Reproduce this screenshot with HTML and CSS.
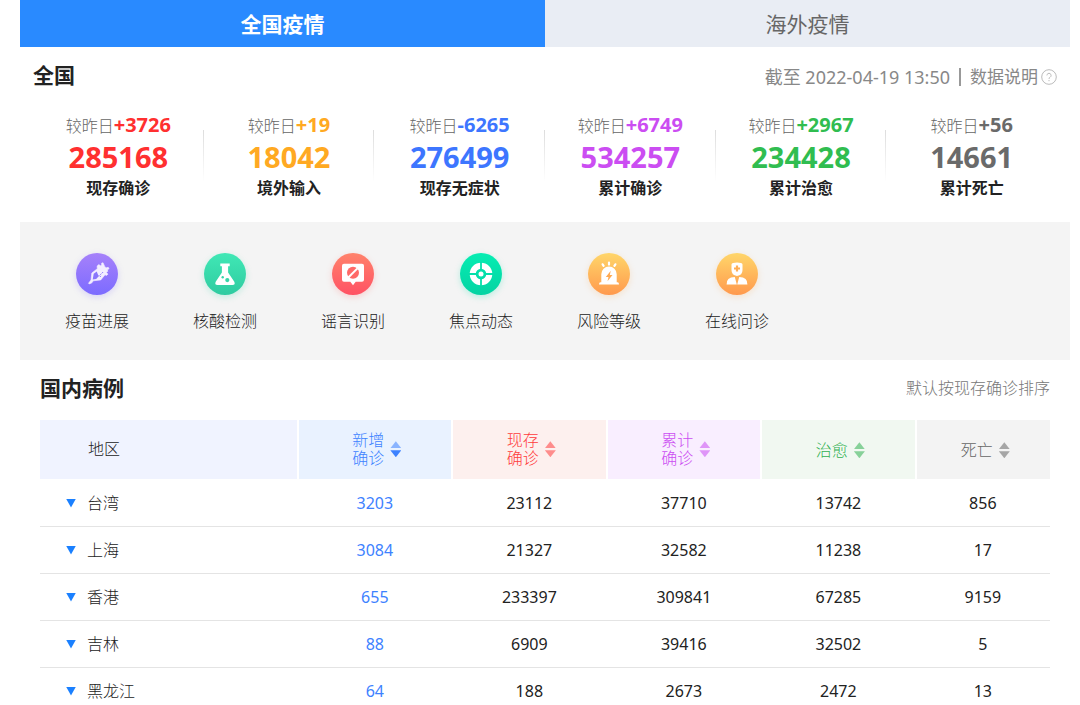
FILE: index.html
```html
<!DOCTYPE html>
<html lang="zh-CN">
<head>
<meta charset="utf-8">
<title>全国疫情</title>
<link rel="stylesheet" href="styles.css">
</head>
<body>
<nav class="tabs">
  <button class="tab tab-active" type="button">全国疫情</button>
  <button class="tab" type="button">海外疫情</button>
</nav>

<section class="summary">
  <header class="summary-head">
    <h2 class="title">全国</h2>
    <p class="updated">
      <span>截至 2022-04-19 13:50</span>
      <span class="bar"></span>
      <a class="note" href="#">数据说明<svg class="help" viewBox="0 0 16 16" fill="none" stroke="#bbb"><circle cx="8" cy="8" r="7.3"/><path d="M5.9 6.4a2.1 2.1 0 1 1 3.2 1.8C8.3 8.7 8 9 8 9.900M8 11v1.200"/></svg></a>
    </p>
  </header>
  <ul class="stats">
    <li class="stat red"><p class="delta">较昨日<b>+3726</b></p><strong class="total">285168</strong><p class="label">现存确诊</p></li>
    <li class="stat orange"><p class="delta">较昨日<b>+19</b></p><strong class="total">18042</strong><p class="label">境外输入</p></li>
    <li class="stat blue"><p class="delta">较昨日<b>-6265</b></p><strong class="total">276499</strong><p class="label">现存无症状</p></li>
    <li class="stat purple"><p class="delta">较昨日<b>+6749</b></p><strong class="total">534257</strong><p class="label">累计确诊</p></li>
    <li class="stat green"><p class="delta">较昨日<b>+2967</b></p><strong class="total">234428</strong><p class="label">累计治愈</p></li>
    <li class="stat gray"><p class="delta">较昨日<b>+56</b></p><strong class="total">14661</strong><p class="label">累计死亡</p></li>
  </ul>
</section>

<nav class="services">
  <a class="service" href="#">
    <span class="badge badge-violet"><svg viewBox="0 0 42 42"><path fill="#f3eeff" stroke="#f3eeff" stroke-width=".6" stroke-linejoin="round" d="M12.500 30.200l2.500-3.200.8-7 5.500-4.300-.2-2.600 1.700-1.500 1.700 1.100 1.300-.6-.3-1.800 1.500-.6 1.900 4.200 1.300.9 2-.5.9 1.300-1.700 1.400.4 1.300-1.500.9 1.600 2-1.400 1.200-1.500-.6-4.200 5.100-7.500.9-1.700 2.300-2.500.8z"/><path fill="#8a76fb" d="M17.700 20.800l3-2.400 2 4.800-2.500 2.900-3.500.5z"/><path d="M22.300 23.300l1-1.100M24.300 21.800l1-1.100M23.900 24l1-1.100M26 20.200l1-1.100" stroke="#8a76fb" stroke-width="1"/></svg></span>
    疫苗进展
  </a>
  <a class="service" href="#">
    <span class="badge badge-teal"><svg viewBox="0 0 42 42"><path fill="#fff" d="M16.300 10.600h9.400v2.600h-1.600v6.300l6.200 9.200q1.400 3.300-1.900 3.300H13.600q-3.300 0-1.900-3.300l6.200-9.200v-6.300h-1.600z"/><circle cx="23.300" cy="27.100" r="2.100" fill="#35d6a8"/><circle cx="18.700" cy="24.200" r="1.200" fill="#35d6a8"/></svg></span>
    核酸检测
  </a>
  <a class="service" href="#">
    <span class="badge badge-red"><svg viewBox="0 0 42 42"><path fill="#fff" d="M12 10.700h18q2 0 2 2v14q0 2-2 2h-6.300L21 32.300l-2.700-3.600H12q-2 0-2-2v-14q0-2 2-2z"/><circle cx="21" cy="19.800" r="6" fill="#ff6a68"/><path d="M16.300 24.500l9.400-9.400" stroke="#fff" stroke-width="2"/></svg></span>
    谣言识别
  </a>
  <a class="service" href="#">
    <span class="badge badge-mint"><svg viewBox="0 0 42 42" fill="none" stroke="#fff"><circle cx="21" cy="21" r="8.300" stroke-width="6"/><path d="M21 9v24M9 21h24" stroke="#05dfaa" stroke-width="1.800"/><circle cx="21" cy="21" r="4.300" fill="#05dfaa" stroke="none"/><circle cx="21" cy="21" r="2.500" fill="#fff" stroke="none"/></svg></span>
    焦点动态
  </a>
  <a class="service" href="#">
    <span class="badge badge-amber"><svg viewBox="0 0 42 42" fill="#fff"><path d="M13.300 29.200v-8a7.700 7.700 0 0 1 15.400 0v8h.8q1.500 0 1.500 2.300H11q0-2.300 1.500-2.300z"/><path d="M22.800 17.800l-5 6.200h2.700l-1 4.200 5-6.200h-2.700z" fill="#ffaa52"/><path d="M21 9.600v2M14.600 11.300l1 1.600M27.400 11.300l-1 1.600" stroke="#fff" stroke-width="2.200" stroke-linecap="round"/></svg></span>
    风险等级
  </a>
  <a class="service" href="#">
    <span class="badge badge-amber"><svg viewBox="0 0 42 42" fill="#fff"><path d="M15.500 11.600q0-1.600 1.600-1.700 4-.6 7.800 0 1.600.1 1.600 1.700v5.500q0 5.600-5.500 5.800-5.500-.2-5.500-5.800z"/><path d="M10.600 31.500q-.5-7.300 8.200-7.600l2 7.600zM31.400 31.500q.5-7.300-8.200-7.600l-2 7.600z"/><path d="M21 12.500v6M18 15.500h6" stroke="#ffae57" stroke-width="2.200"/></svg></span>
    在线问诊
  </a>
</nav>

<section class="cases">
  <header class="cases-head">
    <h2 class="title">国内病例</h2>
    <p class="hint">默认按现存确诊排序</p>
  </header>
  <table class="table">
    <colgroup><col class="col-area"><col class="col-num"><col class="col-num"><col class="col-num"><col class="col-num"><col class="col-dead"></colgroup>
    <thead>
      <tr>
        <th class="th-area" scope="col">地区</th>
        <th class="th-new" scope="col"><button class="sort" type="button"><span>新增<br>确诊</span><span class="arrows"><i class="up"></i><i class="down on"></i></span></button></th>
        <th class="th-now" scope="col"><button class="sort" type="button"><span>现存<br>确诊</span><span class="arrows"><i class="up"></i><i class="down"></i></span></button></th>
        <th class="th-sum" scope="col"><button class="sort" type="button"><span>累计<br>确诊</span><span class="arrows"><i class="up"></i><i class="down"></i></span></button></th>
        <th class="th-cured" scope="col"><button class="sort" type="button"><span>治愈</span><span class="arrows"><i class="up"></i><i class="down"></i></span></button></th>
        <th class="th-dead" scope="col"><button class="sort" type="button"><span>死亡</span><span class="arrows"><i class="up"></i><i class="down"></i></span></button></th>
      </tr>
    </thead>
    <tbody>
      <tr><td class="area"><button class="expand" type="button"><i class="caret"></i>台湾</button></td><td class="new">3203</td><td>23112</td><td>37710</td><td>13742</td><td>856</td></tr>
      <tr><td class="area"><button class="expand" type="button"><i class="caret"></i>上海</button></td><td class="new">3084</td><td>21327</td><td>32582</td><td>11238</td><td>17</td></tr>
      <tr><td class="area"><button class="expand" type="button"><i class="caret"></i>香港</button></td><td class="new">655</td><td>233397</td><td>309841</td><td>67285</td><td>9159</td></tr>
      <tr><td class="area"><button class="expand" type="button"><i class="caret"></i>吉林</button></td><td class="new">88</td><td>6909</td><td>39416</td><td>32502</td><td>5</td></tr>
      <tr><td class="area"><button class="expand" type="button"><i class="caret"></i>黑龙江</button></td><td class="new">64</td><td>188</td><td>2673</td><td>2472</td><td>13</td></tr>
    </tbody>
  </table>
</section>
</body>
</html>
```
FILE: styles.css
```css
* { box-sizing: border-box; }
body {
  margin: 0 10px 0 20px;
  background: #fff;
  color: #222;
  font-family: "Noto Sans", "Noto Sans CJK SC", sans-serif;
  font-size: 16px;
  line-height: 24px;
}
h2, p, ul { margin: 0; padding: 0; }
button {
  margin: 0;
  padding: 0;
  border: 0;
  background: none;
  color: inherit;
  font: inherit;
  cursor: pointer;
}
a { color: inherit; text-decoration: none; }

.tabs { display: flex; }
.tab {
  flex: 1;
  height: 47px;
  background: #e9edf4;
  color: #666;
  font-size: 21px;
}
.tab-active { background: #298aff; color: #fff; font-weight: 700; }

.title { font-size: 21px; line-height: 30px; font-weight: 700; }

.summary { padding: 13px 13px 22px; }
.summary-head { display: flex; justify-content: space-between; align-items: flex-end; }
.updated { display: flex; align-items: center; color: #888; font-size: 18px; line-height: 26px; }
.bar { width: 2px; height: 18px; margin: 0 9px; background: #999; }
.note { display: flex; align-items: center; font-size: 17px; gap: 3px; }
.help { width: 16px; height: 16px; }

.stats { display: grid; grid-template-columns: repeat(6, 1fr); margin-top: 23px; list-style: none; }
.stat { position: relative; text-align: center; }
.stat + .stat::before {
  content: "";
  position: absolute;
  left: -1px;
  top: 17px;
  width: 1px;
  height: 52px;
  background: linear-gradient(#ddd, #fff);
}
.delta { color: #666; font-weight: 300; line-height: 24px; }
.delta b { font-size: 20px; font-weight: 700; }
.total { display: block; font-size: 29px; line-height: 38px; }
.label { font-weight: 700; line-height: 24px; }
.red b, .red .total { color: #ff3030; }
.orange b, .orange .total { color: #ffa922; }
.blue b, .blue .total { color: #3d76ff; }
.purple b, .purple .total { color: #cb4df2; }
.green b, .green .total { color: #30bd50; }
.gray b, .gray .total { color: #6a6a6a; }

.services {
  display: grid;
  grid-template-columns: repeat(8, 1fr);
  padding: 31px 13px 27px;
  background: #f4f4f4;
}
.service {
  display: flex;
  flex-direction: column;
  align-items: center;
  gap: 14px;
  font-weight: 300;
}
.badge { width: 42px; height: 42px; border-radius: 50%; }
.badge svg { display: block; width: 42px; height: 42px; }
.badge-violet { background: linear-gradient(#a681fa, #7c6bff); box-shadow: 0 2px 6px #8873fa40; }
.badge-teal { background: linear-gradient(#40e8b5, #2fcba0); box-shadow: 0 2px 6px #35d6a840; }
.badge-red { background: linear-gradient(#ff826b, #ff5264); box-shadow: 0 2px 6px #ff6a6840; }
.badge-mint { background: linear-gradient(#05edb2, #05d3a3); box-shadow: 0 2px 6px #05dfaa40; }
.badge-amber { background: linear-gradient(#ffd66a, #ff994d); box-shadow: 0 2px 6px #ffae5740; }

.cases { padding: 13px 20px 0; }
.cases-head { display: flex; justify-content: space-between; align-items: center; }
.hint { color: #777; font-weight: 300; }

.table { width: 100%; margin-top: 17px; border-collapse: collapse; table-layout: fixed; }
.col-area { width: 25.5%; }
.col-num { width: 15.3%; }
.col-dead { width: 13.3%; }
th {
  height: 59px;
  padding: 0;
  border: 0 solid #fff;
  border-width: 0 2px 1px 0;
  font-weight: 300;
  line-height: 18px;
}
th:last-child { border-right-width: 0; }
td {
  height: 47px;
  padding: 1px 0 0;
  border-bottom: 1px solid #e4e4e4;
  text-align: center;
}
.th-area { padding-left: 48px; background: #f0f3ff; text-align: left; }
.th-new { background: #e9f2ff; color: #3d82ff; }
.th-now { background: #fdf0ee; color: #ff3c3c; }
.th-sum { background: #f9eeff; color: #cb4df2; }
.th-cured { background: #f1f8f1; color: #30b050; }
.th-dead { background: #f3f3f3; color: #666; }
.sort { display: inline-flex; align-items: center; gap: 6px; padding-left: 4px; vertical-align: middle; }
.arrows { display: grid; gap: 2px; }
.up, .down {
  width: 11px;
  height: 7px;
  background: currentColor;
  opacity: 0.55;
}
.up { clip-path: polygon(50% 0, 100% 100%, 0 100%); }
.down { clip-path: polygon(0 0, 100% 0, 50% 100%); }
.on { opacity: 1; }
.area { padding-left: 26px; text-align: left; font-weight: 300; }
.expand { display: flex; align-items: center; gap: 11px; }
.caret {
  width: 10px;
  height: 9px;
  background: #1a80ff;
  clip-path: polygon(0 0, 100% 0, 50% 100%);
}
.new { color: #3d82ff; }
```
